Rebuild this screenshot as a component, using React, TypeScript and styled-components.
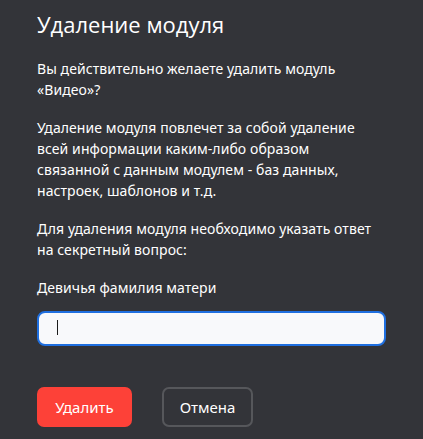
import React from "react";
import styled, { createGlobalStyle } from "styled-components";

const Global = createGlobalStyle`
  html, body { margin: 0; padding: 0; background: #333439; }
  * { box-sizing: border-box; }
`;

const Dialog = styled.div`
  width: 423px;
  height: 439px;
  background: #333439;
  padding: 9px 37px 0 37px;
  display: flex;
  flex-direction: column;
  font-family: "Noto Sans", "Open Sans", sans-serif;
  color: #ffffff;
`;

const Title = styled.h1`
  margin: 0;
  font-family: "Open Sans", sans-serif;
  font-weight: 400;
  font-size: 22px;
  line-height: 30px;
  color: #ffffff;
`;

const Paragraph = styled.p<{ $top: number }>`
  margin: ${(p) => p.$top}px 0 0 0;
  font-size: 14px;
  line-height: 21px;
  letter-spacing: 0.08px;
  color: #ffffff;
`;

const Field = styled.div`
  position: relative;
  margin-top: 13px;
  width: 349px;
`;

const Input = styled.input`
  display: block;
  width: 349px;
  height: 35px;
  border: 2px solid #1f6fe0;
  border-radius: 8px;
  background: #f8f9fb;
  padding: 0 18px;
  font-size: 15px;
  outline: none;
  caret-color: transparent;
`;

const Caret = styled.span`
  position: absolute;
  left: 20px;
  top: 9px;
  width: 1px;
  height: 15px;
  background: #1b1b1b;
  pointer-events: none;
`;

const Actions = styled.div`
  margin-top: 41px;
  display: flex;
  gap: 30px;
`;

const Button = styled.button<{ $variant: "danger" | "ghost" }>`
  height: 40px;
  border-radius: 7px;
  font-family: "Noto Sans", sans-serif;
  font-size: 15px;
  color: #ffffff;
  cursor: pointer;
  padding: 0;
  width: ${(p) => (p.$variant === "danger" ? "95px" : "91px")};
  background: ${(p) => (p.$variant === "danger" ? "#fd4138" : "transparent")};
  border: ${(p) => (p.$variant === "danger" ? "none" : "2px solid #56575b")};
`;

export default function App() {
  return (
    <>
      <Global />
      <Dialog>
        <Title>Удаление модуля</Title>
        <Paragraph $top={19}>
          Вы действительно желаете удалить модуль
          <br />
          «Видео»?
        </Paragraph>
        <Paragraph $top={17}>
          Удаление модуля повлечет за собой удаление
          <br />
          всей информации каким-либо образом
          <br />
          связанной с данным модулем - баз данных,
          <br />
          настроек, шаблонов и т.д.
        </Paragraph>
        <Paragraph $top={17}>
          Для удаления модуля необходимо указать ответ
          <br />
          на секретный вопрос:
        </Paragraph>
        <Paragraph $top={17}>Девичья фамилия матери</Paragraph>
        <Field>
          <Input defaultValue="" aria-label="Девичья фамилия матери" />
          <Caret />
        </Field>
        <Actions>
          <Button $variant="danger">Удалить</Button>
          <Button $variant="ghost">Отмена</Button>
        </Actions>
      </Dialog>
    </>
  );
}
